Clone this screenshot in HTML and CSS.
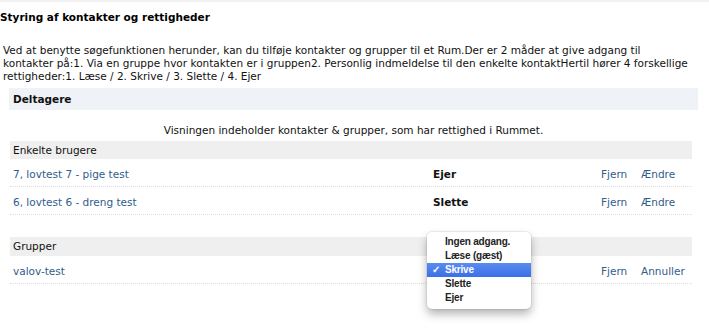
FILE: index.html
```html
<!DOCTYPE html>
<html lang="da">
<head>
<meta charset="utf-8">
<title>Styring af kontakter og rettigheder</title>
<link rel="stylesheet" href="styles.css">
</head>
<body>
<div class="topline"></div>
<h1 class="title">Styring af kontakter og rettigheder</h1>
<p class="intro">Ved at benytte søgefunktionen herunder, kan du tilføje kontakter og grupper til et Rum.Der er 2 måder at give adgang til<br>kontakter på:1. Via en gruppe hvor kontakten er i gruppen2. Personlig indmeldelse til den enkelte kontaktHertil hører 4 forskellige<br>rettigheder:1. Læse / 2. Skrive / 3. Slette / 4. Ejer</p>
<section class="panel">
  <div class="panel-head">Deltagere</div>
  <p class="notice">Visningen indeholder kontakter &amp; grupper, som har rettighed i Rummet.</p>
  <div class="list">
    <div class="group-head">Enkelte brugere</div>
    <div class="row">
      <a class="link" href="#">7, lovtest 7 - pige test</a>
      <span class="role">Ejer</span>
      <a class="link" href="#">Fjern</a>
      <a class="link" href="#">Ændre</a>
    </div>
    <div class="row">
      <a class="link" href="#">6, lovtest 6 - dreng test</a>
      <span class="role">Slette</span>
      <a class="link" href="#">Fjern</a>
      <a class="link" href="#">Ændre</a>
    </div>
    <div class="group-head spaced">Grupper</div>
    <div class="row">
      <a class="link" href="#">valov-test</a>
      <span class="role-cell">
        <span class="menu">
          <span class="menu-item">Ingen adgang.</span>
          <span class="menu-item">Læse (gæst)</span>
          <span class="menu-item selected"><span class="check">✓</span>Skrive</span>
          <span class="menu-item">Slette</span>
          <span class="menu-item">Ejer</span>
        </span>
      </span>
      <a class="link" href="#">Fjern</a>
      <a class="link" href="#">Annuller</a>
    </div>
  </div>
</section>
</body>
</html>
```
FILE: styles.css
```css
html, body {
  margin: 0;
  padding: 0;
  background: #ffffff;
}
body {
  font-family: "DejaVu Sans", Verdana, sans-serif;
  font-size: 10.5px;
  line-height: 13px;
  color: #111111;
  width: 709px;
  min-height: 328px;
  overflow: hidden;
}
.topline {
  height: 2px;
  background: #f2f2f2;
}
.title {
  margin: 9px 0 0 0;
  font-size: 10.5px;
  line-height: 13px;
  font-weight: bold;
  color: #000;
}
.intro {
  margin: 20px 0 0 3px;
  width: 706px;
  white-space: nowrap;
  line-height: 13px;
  color: #111;
}
.panel {
  margin: 5px 0 0 9px;
  width: 689px;
}
.panel-head {
  background: #eff2f6;
  height: 22px;
  line-height: 22px;
  padding-left: 4px;
  font-weight: bold;
  color: #111;
}
.notice {
  margin: 0;
  padding: 14px 0 4px 0;
  text-align: center;
  color: #111;
}
.list {
  margin-left: 1px;
  width: 682px;
}
.group-head {
  background: #efefef;
  height: 18px;
  line-height: 18px;
  padding-left: 3px;
  color: #111;
}
.group-head.spaced {
  margin-top: 22px;
  height: 19px;
  line-height: 19px;
}
.row {
  display: grid;
  grid-template-columns: 420px 168px 40px auto;
  align-items: start;
  box-sizing: border-box;
  height: 28px;
  padding: 9px 0 0 3px;
  border-bottom: 1px dotted #dddddd;
}
.link {
  color: #2f5d8c;
  text-decoration: none;
}
.role {
  font-weight: bold;
  color: #111;
}
.role-cell {
  position: relative;
}
.menu {
  position: absolute;
  left: -6px;
  top: -33px;
  width: 104px;
  box-sizing: border-box;
  padding: 3px 0 4px 0;
  background: #ffffff;
  border-radius: 5px;
  box-shadow: 0 0 0 1px rgba(0,0,0,0.06), 0 5px 10px rgba(0,0,0,0.3);
  display: flex;
  flex-direction: column;
  font-family: "Liberation Sans", Arial, sans-serif;
  font-size: 10px;
  letter-spacing: -0.2px;
  font-weight: bold;
  color: #222;
  z-index: 2;
}
.menu-item {
  position: relative;
  height: 14px;
  line-height: 14px;
  padding-left: 18px;
  white-space: nowrap;
}
.menu-item.selected {
  background: linear-gradient(#5a8cf0, #3b6fe6);
  color: #ffffff;
}
.check {
  position: absolute;
  left: 5px;
  top: 0;
  font-size: 10px;
}
```
